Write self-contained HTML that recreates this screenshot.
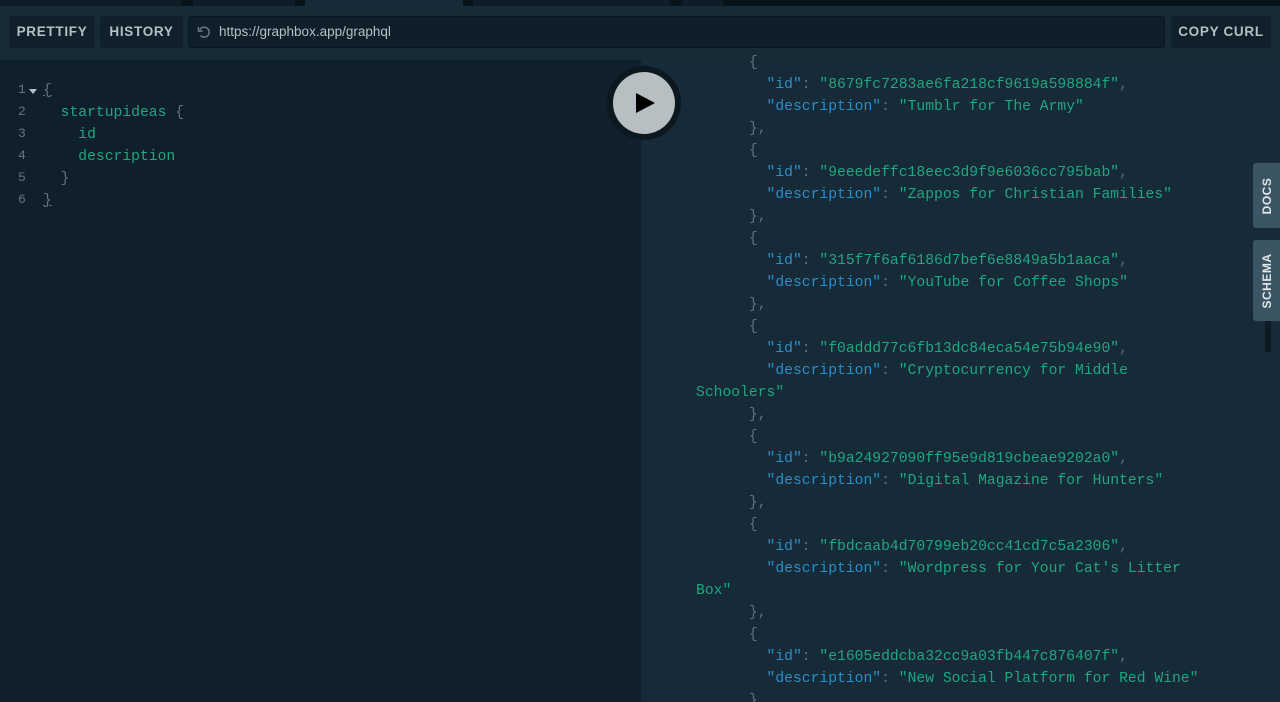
<!DOCTYPE html>
<html><head><meta charset="utf-8"><style>
*{margin:0;padding:0;box-sizing:border-box}
html,body{width:1280px;height:702px;overflow:hidden}
body{background:#162a37;font-family:"Liberation Sans",sans-serif;position:relative}
.top{position:absolute;left:0;top:0;width:1280px;height:6px;background:#061318}
.tab{position:absolute;top:0;height:6px;background:#0e1e29}
.hdr{position:absolute;left:0;top:6px;width:1280px;height:54px;background:#172b37}
.btn{position:absolute;top:16px;height:32px;background:#0f202b;color:#b5bfc5;font-size:13.5px;font-weight:bold;letter-spacing:0.7px;line-height:32px;text-align:center;border-radius:2px}
.url{position:absolute;left:188px;top:16px;width:977px;height:32px;background:#0e1f2a;border:1px solid #0a161e;border-radius:3px;color:#b5bfc5;font-size:13.5px;line-height:30px;padding-left:30px}
.left{position:absolute;left:0;top:60px;width:641px;height:642px;background:#0f1f2b}
.mono{font-family:"Liberation Mono",monospace;font-size:14.7px;white-space:pre;position:absolute;line-height:22px}
.ln{color:#66747e;font-size:13px}
.k{color:#2a8fc7}.s{color:#1fa77f}.p{color:#62717b}.f{color:#1fa77f}
.side{position:absolute;left:1253px;width:27px;background:#3b5562;border-radius:3px 0 0 3px;color:#e0e6e9;font-size:12px;font-weight:bold}
.side span{position:absolute;left:50%;top:50%;transform:translate(-50%,-50%) rotate(-90deg);white-space:nowrap;letter-spacing:0.5px}
</style></head><body>
<div class="top"></div>
<div class="tab" style="left:0;width:181px"></div>
<div class="tab" style="left:193px;width:102px"></div>
<div class="tab" style="left:305px;width:158px;background:#162a37"></div>
<div class="tab" style="left:473px;width:197px"></div>
<div class="tab" style="left:682px;width:41px"></div>
<div class="hdr"></div>
<div class="btn" style="left:10px;width:84px">PRETTIFY</div>
<div class="btn" style="left:100px;width:83px">HISTORY</div>
<div class="url"><svg style="position:absolute;left:8px;top:8px" width="14" height="14" viewBox="0 0 14 14"><path d="M3 4.5A5 5 0 1 1 3.5 10.5" fill="none" stroke="#6f7d86" stroke-width="1.4"/><path d="M1.5 2v4h4" fill="none" stroke="#6f7d86" stroke-width="1.4"/></svg>https://graphbox.app/graphql</div>
<div class="btn" style="left:1171px;width:100px">COPY CURL</div>
<div class="left"></div>
<div class="mono ln" style="left:18px;top:79px">1
2
3
4
5
6</div>
<svg style="position:absolute;left:29px;top:89px" width="8" height="5"><path d="M0 0h8L4 5z" fill="#b5bfc5"/></svg>
<div class="mono" style="left:43px;top:80px"><span class="p" style="text-decoration:underline">{</span>
  <span class="f">startupideas</span> <span class="p">{</span>
    <span class="f">id</span>
    <span class="f">description</span>
  <span class="p">}</span>
<span class="p" style="text-decoration:underline">}</span></div>
<svg style="position:absolute;left:606px;top:66px" width="76" height="76"><circle cx="38" cy="37" r="37" fill="#0b1820"/><circle cx="38" cy="37" r="31" fill="#b7bfc3"/><path d="M30 27L49 37L30 47z" fill="#000"/></svg>
<div class="mono" style="left:696px;top:52px">      <span class="p">{</span>
        <span class="k">"id"</span><span class="p">: </span><span class="s">"8679fc7283ae6fa218cf9619a598884f"</span><span class="p">,</span>
        <span class="k">"description"</span><span class="p">: </span><span class="s">"Tumblr for The Army"</span>
      <span class="p">},</span>
      <span class="p">{</span>
        <span class="k">"id"</span><span class="p">: </span><span class="s">"9eeedeffc18eec3d9f9e6036cc795bab"</span><span class="p">,</span>
        <span class="k">"description"</span><span class="p">: </span><span class="s">"Zappos for Christian Families"</span>
      <span class="p">},</span>
      <span class="p">{</span>
        <span class="k">"id"</span><span class="p">: </span><span class="s">"315f7f6af6186d7bef6e8849a5b1aaca"</span><span class="p">,</span>
        <span class="k">"description"</span><span class="p">: </span><span class="s">"YouTube for Coffee Shops"</span>
      <span class="p">},</span>
      <span class="p">{</span>
        <span class="k">"id"</span><span class="p">: </span><span class="s">"f0addd77c6fb13dc84eca54e75b94e90"</span><span class="p">,</span>
        <span class="k">"description"</span><span class="p">: </span><span class="s">"Cryptocurrency for Middle</span>
<span class="s">Schoolers"</span>
      <span class="p">},</span>
      <span class="p">{</span>
        <span class="k">"id"</span><span class="p">: </span><span class="s">"b9a24927090ff95e9d819cbeae9202a0"</span><span class="p">,</span>
        <span class="k">"description"</span><span class="p">: </span><span class="s">"Digital Magazine for Hunters"</span>
      <span class="p">},</span>
      <span class="p">{</span>
        <span class="k">"id"</span><span class="p">: </span><span class="s">"fbdcaab4d70799eb20cc41cd7c5a2306"</span><span class="p">,</span>
        <span class="k">"description"</span><span class="p">: </span><span class="s">"Wordpress for Your Cat's Litter</span>
<span class="s">Box"</span>
      <span class="p">},</span>
      <span class="p">{</span>
        <span class="k">"id"</span><span class="p">: </span><span class="s">"e1605eddcba32cc9a03fb447c876407f"</span><span class="p">,</span>
        <span class="k">"description"</span><span class="p">: </span><span class="s">"New Social Platform for Red Wine"</span>
      <span class="p">}</span></div>
<div class="side" style="top:163px;height:65px"><span>DOCS</span></div>
<div class="side" style="top:240px;height:81px"><span>SCHEMA</span></div>
<div style="position:absolute;left:1265px;top:321px;width:6px;height:31px;background:#0d1a22"></div>
</body></html>
